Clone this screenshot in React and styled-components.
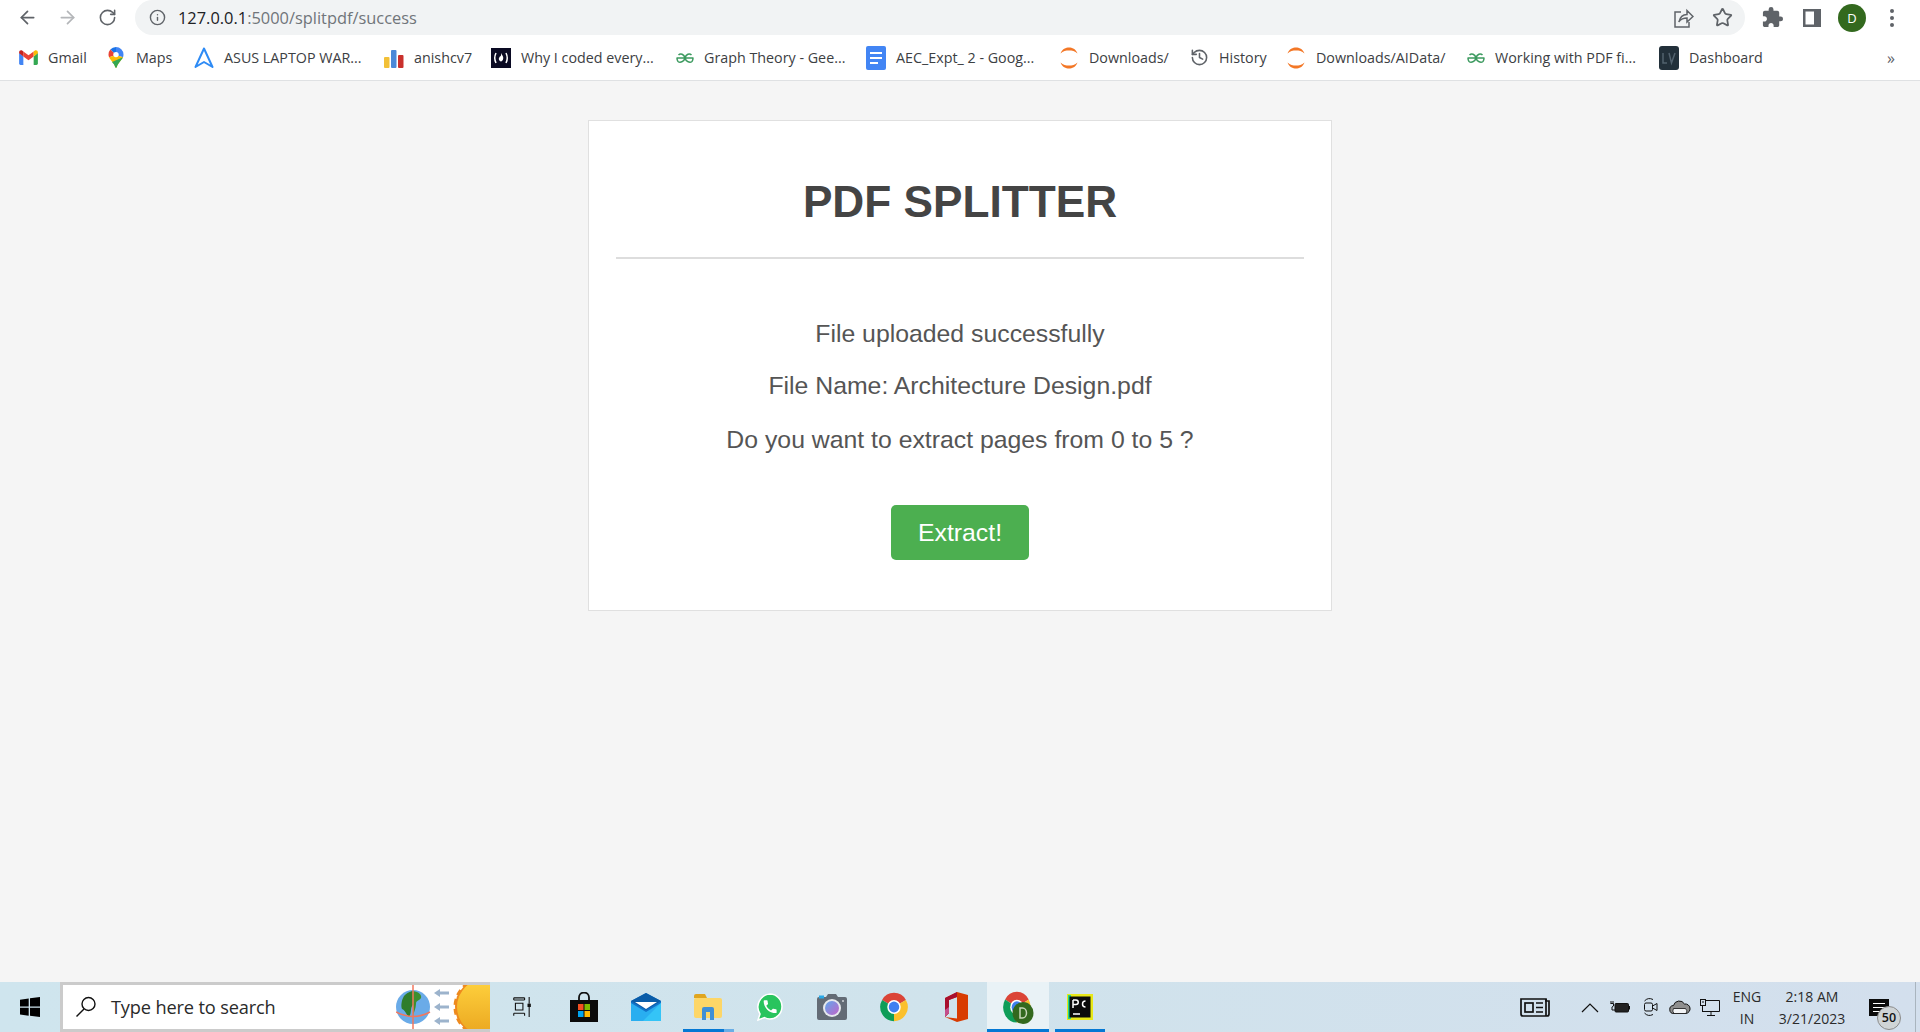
import React from 'react';
import styled, {createGlobalStyle} from 'styled-components';
import {ArrowLeft, ArrowRight, RotateCw, Info, Star, History} from 'lucide-react';
import {MdExtension} from 'react-icons/md';

const GlobalStyle = createGlobalStyle`
  html, body { margin: 0; padding: 0; }
  body { font-family: "Liberation Sans", Arial, sans-serif; background: #f5f5f5; }
`
const Screen = styled.div`
  display: flex;
  flex-direction: column;
  width: 1920px;
  height: 1032px;
  overflow: hidden;
`
const Toolbar = styled.div`
  display: flex;
  align-items: center;
  height: 35px;
  background: #fff;
  color: #5f6368;
`
const NavButton = styled.div`
  display: flex;
  align-items: center;
  justify-content: center;
  width: 40px;
  height: 35px;
  color: ${props => props.$muted ? '#b4b6b9' : '#5f6368'};
`
const NavGroup = styled.div`
  display: flex;
  padding-left: 7px;
  padding-right: 8px;
`
const Omnibox = styled.div`
  display: flex;
  align-items: center;
  width: 1610px;
  height: 35px;
  padding-left: 14px;
  box-sizing: border-box;
  background: #f1f3f4;
  border-radius: 18px;
`
const Url = styled.div`
  margin-left: 12px;
  font-family: "Open Sans", sans-serif;
  font-size: 16.4px;
  color: #70757a;
  white-space: nowrap;
  b { font-weight: 400; color: #202124; }
`
const OmniIcons = styled.div`
  display: flex;
  align-items: center;
  gap: 18px;
  margin-left: auto;
  padding-right: 12px;
`
const ChromeIcons = styled.div`
  display: flex;
  align-items: center;
  padding-left: 7px;
`
const Avatar = styled.div`
  display: flex;
  align-items: center;
  justify-content: center;
  width: 28px;
  height: 28px;
  border-radius: 50%;
  background: #33691e;
  color: #fff;
  font-family: "Open Sans", sans-serif;
  font-size: 13px;
`
const Bookmarks = styled.div`
  display: flex;
  align-items: center;
  height: 45px;
  padding-left: 19px;
  background: #fff;
  border-bottom: 1px solid #dfe1e3;
`
const Bookmark = styled.div`
  display: flex;
  flex: none;
  align-items: center;
  gap: 10px;
  width: ${props => props.$width}px;
  font-family: "Open Sans", sans-serif;
  font-size: 14.3px;
  color: #3c4043;
  white-space: nowrap;
  svg { flex: none; }
`
const Overflow = styled.div`
  margin-left: auto;
  padding-right: 25px;
  font-family: "Open Sans", sans-serif;
  font-size: 16px;
  color: #5f6368;
`
const Main = styled.main`
  flex: 1;
  padding-top: 39px;
  background: #f5f5f5;
`
const Card = styled.section`
  box-sizing: border-box;
  width: 744px;
  height: 491px;
  margin: 0 auto 0 588px;
  padding: 0 27px;
  background: #fff;
  border: 1px solid #e0e0e0;
  text-align: center;
`
const Title = styled.h1`
  margin: 0;
  padding-top: 54px;
  height: 138px;
  box-sizing: border-box;
  font-size: 44.2px;
  line-height: 53px;
  font-weight: 700;
  color: #444;
  border-bottom: 2px solid #ddd;
`
const Messages = styled.div`
  padding-top: 60px;
`
const Message = styled.p`
  margin: 0 0 ${props => props.$gap}px;
  font-size: 24.8px;
  line-height: 30px;
  color: #555;
`
const ExtractButton = styled.button`
  display: block;
  width: 138px;
  height: 55px;
  margin: 50px auto 0;
  padding: 0;
  border: 0;
  border-radius: 5px;
  background: #4caf50;
  color: #fff;
  font-family: inherit;
  font-size: 24.8px;
`
const Taskbar = styled.footer`
  display: flex;
  align-items: stretch;
  flex: none;
  height: 50px;
  background: linear-gradient(90deg, #cfe5ee 0%, #d0e3ec 50%, #d3dfed 100%);
`
const StartButton = styled.div`
  display: flex;
  align-items: center;
  justify-content: center;
  width: 60px;
`
const SearchBox = styled.div`
  display: flex;
  align-items: center;
  box-sizing: border-box;
  width: 430px;
  padding-left: 12px;
  background: #fff;
  border: 3px solid #cbcbcb;
  border-right: 0;
  overflow: hidden;
`
const SearchText = styled.span`
  margin-left: 14px;
  font-family: "Open Sans", sans-serif;
  font-size: 18.2px;
  letter-spacing: -0.15px;
  color: #2a2a2a;
`
const Weather = styled.svg`
  flex: none;
  margin-left: auto;
  margin-top: -3px;
  margin-bottom: -3px;
`
const TaskSlots = styled.div`
  display: flex;
  padding-left: 1px;
`
const TaskSlot = styled.div`
  position: relative;
  display: flex;
  align-items: center;
  justify-content: center;
  width: 62px;
  background: ${props => props.$active ? '#e9f2f6' : 'transparent'};
`
const RunningBar = styled.span`
  position: absolute;
  left: ${props => props.$inset}px;
  right: ${props => props.$inset}px;
  bottom: 0;
  height: 3px;
  background: #0478d4;
`
const GroupedBar = styled.span`
  position: absolute;
  right: 5px;
  bottom: 0;
  width: 10px;
  height: 3px;
  background: #6aaee6;
`
const Tray = styled.div`
  display: flex;
  align-items: center;
  margin-left: auto;
  padding-right: 4px;
  color: #1c1c1c;
`
const TrayIcon = styled.div`
  display: flex;
  align-items: center;
  justify-content: center;
  flex: none;
  width: ${props => props.$width}px;
  margin-right: ${props => props.$after || 0}px;
`
const TrayText = styled.div`
  display: flex;
  flex-direction: column;
  align-items: center;
  gap: 3px;
  flex: none;
  width: ${props => props.$width}px;
  font-family: "Open Sans", sans-serif;
  font-size: 14px;
  line-height: 19px;
  color: #2b2b2b;
`
const Notify = styled.div`
  position: relative;
  display: flex;
  align-items: center;
  flex: none;
  width: 50px;
  height: 100%;
  margin-left: 14px;
  padding-left: 3px;
  box-sizing: border-box;
  border-right: 1px solid #a9b4be;
`
const NotifyBadge = styled.span`
  position: absolute;
  left: 11px;
  top: 24px;
  width: 24px;
  height: 24px;
  box-sizing: border-box;
  border: 1px solid #8b8b8b;
  border-radius: 50%;
  background: #cfd4d6;
  font-family: "Open Sans", sans-serif;
  font-size: 12.5px;
  font-weight: 600;
  line-height: 22px;
  text-align: center;
  color: #111;
`

const GmailIcon = () => (
  <svg width="19" height="15" viewBox="0 0 20 16">
    <path d="M0 3v11.500A1.500 1.500 0 0 0 1.500 16H4.500V7z" fill="#4285f4"/>
    <path d="M20 3v11.500a1.500 1.500 0 0 1-1.500 1.500h-3V7z" fill="#34a853"/>
    <path d="M4.500 7 10 11l5.500-4V1.500L10 5.500 4.500 1.500z" fill="#ea4335"/>
    <path d="M0 3.500 4.500 7V1.500L3.200.6C1.800-.4 0 .6 0 2.300z" fill="#c5221f"/>
    <path d="M20 3.500 15.500 7V1.500L16.800.6C18.200-.4 20 .6 20 2.300z" fill="#fbbc04"/>
  </svg>
)
const MapsIcon = () => (
  <svg width="18" height="24" viewBox="2 0 18 24">
    <path d="M10 1a7.500 7.500 0 0 0-5.700 2.600L10 9z" fill="#1a73e8"/>
    <path d="M10 1a7.600 7.600 0 0 1 7.500 7.600c0 1-.2 1.800-.5 2.600L10 9z" fill="#4285f4"/>
    <path d="M4.300 3.600A7.500 7.500 0 0 0 2.500 8.600c0 1 .2 1.900.6 2.700L10 9z" fill="#ea4335"/>
    <path d="M3.100 11.300 10 9l7 2.200c-1.500 3.200-5.400 6-6.200 10-.1.600-1.500.600-1.600 0-.8-4-4.700-6.700-6.100-9.900z" fill="#fbbc04"/>
    <path d="M6 16 17 11.200c-1.500 3.200-5.400 6-6.200 10-.1.600-1.500.600-1.600 0C8.800 19 7.300 17.500 6 16z" fill="#34a853"/>
    <circle cx="10" cy="8.600" r="2.700" fill="#fff"/>
  </svg>
)
const AsusIcon = () => (
  <svg width="20" height="22" viewBox="0 0 20 22">
    <path d="M10 1.500 1.500 20 10 15l8.500 5z" fill="none" stroke="#2e8bf5" strokeWidth="2" strokeLinejoin="round"/>
  </svg>
)
const BarsIcon = () => (
  <svg width="20" height="20" viewBox="0 0 20 20">
    <rect x="0" y="9" width="5.500" height="11" rx="1" fill="#f2c037"/>
    <rect x="7" y="2" width="5.500" height="18" rx="1" fill="#4a88d8"/>
    <rect x="14" y="7" width="5.500" height="13" rx="1" fill="#c9302c"/>
  </svg>
)
const FreecodeIcon = () => (
  <svg width="20" height="20" viewBox="0 0 20 20">
    <rect width="20" height="20" fill="#0a0a23"/>
    <path d="M5 5Q2.500 10 5 15M15 5Q17.500 10 15 15" fill="none" stroke="#fff" strokeWidth="1.500"/>
    <path d="M10 5c1 2.500 3 3.500 2 6.500-.4 1.200-1.200 1.800-2 2-1-.2-1.800-.8-2.100-2-.5-1.800 1.200-2.300 1.300-4 .3.700.6 1 .8 1.300z" fill="#fff"/>
  </svg>
)
const GfgIcon = () => (
  <svg width="18" height="10" viewBox="0 0 18 10">
    <path d="M9 5H17.500M9 5H.500M9 5C8 1 4.500 0 2.500 2M9 5C10 1 13.500 0 15.500 2M9 5C8 9 4 10 2 8.500C1 7.500 1 6 1 5M9 5C10 9 14 10 16 8.500C17 7.500 17 6 17 5" fill="none" stroke="#3c9a5f" strokeWidth="1.500"/>
  </svg>
)
const DocsIcon = () => (
  <svg width="20" height="24" viewBox="0 0 20 24">
    <rect y="0" width="20" height="24" rx="2" fill="#4285f4"/>
    <path d="M4 7h12M4 12h12M4 17h8" stroke="#fff" strokeWidth="2.200"/>
  </svg>
)
const JupyterIcon = () => (
  <svg width="20" height="24" viewBox="0 0 20 24">
    <path d="M1.500 7.500C3 3 7 1.500 10 1.500s7 1.500 8.500 6C16 5 13 4.500 10 4.500S4 5 1.500 7.500zM1.500 16.500C3 21 7 22.500 10 22.500s7-1.500 8.500-6C16 19 13 19.500 10 19.500S4 19 1.500 16.500z" fill="#f37726"/>
  </svg>
)
const DashboardIcon = () => (
  <svg width="20" height="24" viewBox="0 0 20 24">
    <rect width="20" height="24" rx="3" fill="#22303a"/>
    <path d="M4 7v10h4M10 7l2.500 10L16 7" fill="none" stroke="#52626e" strokeWidth="1.500"/>
  </svg>
)
const ShareIcon = () => (
  <svg width="22" height="22" viewBox="0 0 22 22" fill="none" stroke="#5f6368" strokeWidth="1.500">
    <path d="M9 5H3v15h14v-5"/>
    <path d="M7 15c1-5 4-7.500 8-7.500V3.500l6 6-6 5.500v-4c-3 0-6 1-8 3.500z"/>
  </svg>
)
const SidePanelIcon = () => (
  <svg width="18" height="18" viewBox="0 0 18 18">
    <path d="M0 0h18v18H0zM2.500 2.500v13H11v-13z" fill="#5f6368" fillRule="evenodd"/>
  </svg>
)
const DotsIcon = () => (
  <svg width="4" height="18" viewBox="0 0 4 18">
    <circle cx="2" cy="2" r="2" fill="#5f6368"/>
    <circle cx="2" cy="9" r="2" fill="#5f6368"/>
    <circle cx="2" cy="16" r="2" fill="#5f6368"/>
  </svg>
)
const WindowsIcon = () => (
  <svg width="20" height="20" viewBox="0 0 20 20">
    <path d="M0 2.800 8.700 1.500v8H0zM10 1.300 20 0v9.500H10zM0 10.700h8.700v8L0 17.400zM10 10.700h10V20L10 18.700z" fill="#000"/>
  </svg>
)
const MagnifierIcon = () => (
  <svg width="22" height="22" viewBox="0 0 22 22" fill="none" stroke="#111" strokeWidth="1.400">
    <circle cx="13.500" cy="8" r="6.500"/>
    <path d="M9 13 1.500 20.500"/>
  </svg>
)
const WeatherIcon = () => (
  <Weather width="94" height="50" viewBox="0 0 94 50">
    <defs>
      <linearGradient id="sun" x1="0" y1="0" x2="0" y2="1">
        <stop offset="0" stopColor="#ffd23e"/>
        <stop offset="1" stopColor="#eaa620"/>
      </linearGradient>
    </defs>
    <ellipse cx="17" cy="25" rx="17" ry="17" fill="#6aabe8"/>
    <path d="M8 14c5-5 9-5 9-5v14c-3 2-1 8-4 12-3-3-4-7-7-8-1-2-1-8 2-13z" fill="#2f7d2c"/>
    <path d="M17 9c6 1 9 4 8 7-2 3-5 2-5 6 0 5-3 9-3 13z" fill="#3d8f2f"/>
    <path d="M17 0v50" stroke="#f3775c" strokeWidth="1.500"/>
    <path d="M0 30q17 9 34 0" fill="none" stroke="#f3775c" strokeWidth="1.500"/>
    <path d="M38 11l6-4v2.500h9v3h-9V15zM38 25l6-4v2.500h9v3h-9V29zM38 39l6-4v2.500h9v3h-9V43z" fill="#9cb3cc"/>
    <circle cx="87" cy="25" r="28" fill="#ee8a1e" stroke="#ee8a1e" strokeWidth="3" strokeDasharray="6 4"/>
    <circle cx="89" cy="25" r="28" fill="url(#sun)"/>
  </Weather>
)
const TaskViewIcon = () => (
  <svg width="23" height="20" viewBox="0 0 23 24" fill="none" stroke="#111" strokeWidth="1.300">
    <path d="M1 1h13M1 3.500h13M3 7.500h9v8H3zM1 19.500h13M1 22.500V19.500M14 19.500v3M1 3.500V1M14 3.500V1M19.500 0v8M19.500 12v12"/>
    <rect x="17.500" y="8" width="4" height="4" fill="#111" stroke="none"/>
  </svg>
)
const StoreIcon = () => (
  <svg width="30" height="30" viewBox="0 0 30 30">
    <path d="M10 9V5.500a5 5 0 0 1 10 0V9" fill="none" stroke="#111" strokeWidth="1.800"/>
    <path d="M1 8h28v22H1z" fill="#0b0b0b"/>
    <rect x="9" y="12" width="5.500" height="6" fill="#f25022"/>
    <rect x="15.500" y="12" width="5.500" height="6" fill="#7fba00"/>
    <rect x="9" y="19" width="5.500" height="6" fill="#00a4ef"/>
    <rect x="15.500" y="19" width="5.500" height="6" fill="#ffb900"/>
  </svg>
)
const MailIcon = () => (
  <svg width="30" height="28" viewBox="0 0 30 28">
    <path d="M0 8 15 0l15 8v20H0z" fill="#1173c9"/>
    <path d="M0 8 15 0l15 8-15 9z" fill="#0a5ca8"/>
    <path d="M4 9h22l-11 7z" fill="#fff"/>
    <path d="M0 10 15 19 30 10v18H0z" fill="#29aef0"/>
    <path d="M30 10v18H12z" fill="#34c4f7"/>
  </svg>
)
const ExplorerIcon = () => (
  <svg width="28" height="26" viewBox="0 0 28 26">
    <path d="M0 2a2 2 0 0 1 2-2h9l2 4H0z" fill="#e0a51e"/>
    <rect y="4" width="28" height="20" rx="2" fill="#fdd667"/>
    <path d="M8 26V15a2 2 0 0 1 2-2h8a2 2 0 0 1 2 2v11h-4v-8h-4v8z" fill="#3f8fd6"/>
  </svg>
)
const WhatsappIcon = () => (
  <svg width="26" height="32" viewBox="0 0 26 32">
    <path d="M13 3a12 12.500 0 0 1 0 25c-2 0-4-.5-5.500-1.500L1 29l2-6A13 13 0 0 1 13 3z" fill="#29c45e" stroke="#fff" strokeWidth="1.500"/>
    <g transform="translate(4.500 7) scale(.72)">
      <path d="M6.620 10.790c1.440 2.830 3.760 5.140 6.590 6.590l2.200-2.200c.27-.27.67-.36 1.020-.24 1.120.37 2.330.57 3.570.57.55 0 1 .45 1 1V20c0 .55-.45 1-1 1-9.390 0-17-7.610-17-17 0-.55.45-1 1-1h3.500c.55 0 1 .45 1 1 0 1.250.2 2.450.57 3.570.11.35.03.74-.25 1.020l-2.200 2.200z" fill="#fff"/>
    </g>
  </svg>
)
const CameraIcon = () => (
  <svg width="30" height="26" viewBox="0 0 30 26">
    <defs>
      <linearGradient id="lens" x1="0" y1="0" x2="1" y2="1">
        <stop offset="0" stopColor="#5fa8ee"/>
        <stop offset="1" stopColor="#c264c8"/>
      </linearGradient>
    </defs>
    <path d="M0 5a2 2 0 0 1 2-2h7l2-3h8l2 3h7a2 2 0 0 1 2 2v19a2 2 0 0 1-2 2H2a2 2 0 0 1-2-2z" fill="#636b75"/>
    <rect x="2" y="1.500" width="5" height="3" fill="#29a9e8"/>
    <circle cx="15" cy="14" r="9" fill="#e6e9ee"/>
    <circle cx="15" cy="14" r="7" fill="url(#lens)"/>
    <circle cx="26" cy="7" r="1" fill="#cfd3d8"/>
  </svg>
)
const ChromeLogo = ({size = 30}) => (
  <svg width={size} height={size + 6} viewBox="0 0 24 28" preserveAspectRatio="none">
    <g transform="translate(0 2)">
      <path d="M12 12 2.470 6.500A11 11 0 0 1 21.530 6.500z" fill="#db4437"/>
      <path d="M12 12 2.470 6.500A11 11 0 0 0 12 23z" fill="#0f9d58"/>
      <path d="M12 12 12 23A11 11 0 0 0 21.530 6.500z" fill="#fbc02d"/>
      <circle cx="12" cy="12" r="5.400" fill="#fff"/>
      <circle cx="12" cy="12" r="4.200" fill="#3f7ff0"/>
    </g>
  </svg>
)
const ProfiledChromeIcon = () => (
  <svg width="32" height="36" viewBox="0 0 32 36">
    <g transform="scale(1.240 1.400) translate(0 1)">
      <path d="M12 12 2.470 6.500A11 11 0 0 1 21.530 6.500z" fill="#db4437"/>
      <path d="M12 12 2.470 6.500A11 11 0 0 0 12 23z" fill="#0f9d58"/>
      <path d="M12 12 12 23A11 11 0 0 0 21.530 6.500z" fill="#fbc02d"/>
      <circle cx="12" cy="12" r="5.400" fill="#fff"/>
      <circle cx="12" cy="12" r="4.200" fill="#3f7ff0"/>
    </g>
    <ellipse cx="21" cy="24" rx="10.500" ry="11" fill="#33691e"/>
    <path d="M18 19v10h2.500a4 5 0 0 0 0-10z" fill="none" stroke="#c8d6b9" strokeWidth="1.500"/>
  </svg>
)
const OfficeIcon = () => (
  <svg width="24" height="30" viewBox="0 0 24 30">
    <path d="M13 0 24 3v24l-11 3L1 25l12 1.500V5L5 8v13l-4 4V6z" fill="#d83b01"/>
    <path d="M1 6 13 0v5L5 8v13l-4 4z" fill="#a80f2e"/>
    <path d="M1 25l4-4v-6L1 18z" fill="#c34f8b"/>
  </svg>
)
const PycharmIcon = () => (
  <svg width="26" height="26" viewBox="0 0 26 26">
    <rect width="26" height="26" fill="#e8e818"/>
    <rect x="1" y="1" width="3" height="24" fill="#21d789"/>
    <rect x="2.500" y="2.500" width="21" height="21" fill="#0b0b0b"/>
    <path d="M6 6v8M6 6h3a2 2 0 0 1 0 4.500H6M18.500 7a3 3 0 1 0 0 6M6 20h7" fill="none" stroke="#fff" strokeWidth="1.500"/>
  </svg>
)
const NewsIcon = () => (
  <svg width="30" height="20" viewBox="0 0 30 20" fill="none" stroke="#111" strokeWidth="1.700">
    <path d="M26 2H1v15a2 2 0 0 0 2 2h24a2 2 0 0 0 2-2V4h-3z"/>
    <path d="M26 2v17"/>
    <rect x="5" y="6" width="8" height="9"/>
    <path d="M16 6h7M16 10.500h7M16 15h7"/>
  </svg>
)
const ChevronIcon = () => (
  <svg width="18" height="11" viewBox="0 0 18 11" fill="none" stroke="#111" strokeWidth="1.200">
    <path d="M1 10 9 2l8 8"/>
  </svg>
)
const BatteryIcon = () => (
  <svg width="20" height="12" viewBox="0 0 20 12" fill="none" stroke="#111" strokeWidth="1">
    <path d="M1 0v2.500M3 0v2.500M.5 2.500h3v2.500L2 6v3h3"/>
    <rect x="5" y="2.500" width="13.500" height="8.500" rx="1" fill="#222"/>
    <path d="M19.500 5v3.500"/>
  </svg>
)
const MeetIcon = () => (
  <svg width="16" height="20" viewBox="0 0 16 20" fill="none" stroke="#111" strokeWidth="1">
    <rect x="1.500" y="6" width="8" height="8" rx="1.500"/>
    <path d="M9.500 9 14 6.500v7L9.500 11M1.500 4Q5 0 10 2.500M1.500 16Q5 20 10 17.500"/>
  </svg>
)
const CloudIcon = () => (
  <svg width="22" height="14" viewBox="0 0 22 14">
    <path d="M5 13.500a4 4 0 0 1-.5-8A6 6 0 0 1 15.500 4 4.800 4.800 0 0 1 17 13.500z" fill="#8f8f8f" stroke="#111" strokeWidth="1"/>
    <path d="M5 13.500a4 4 0 0 1-.5-5h12a3.600 3.600 0 0 1 .5 5z" fill="#f2f4f6" stroke="#111" strokeWidth=".8"/>
  </svg>
)
const NetworkIcon = () => (
  <svg width="20" height="17" viewBox="0 0 20 17" fill="none" stroke="#111" strokeWidth="1">
    <path d="M5 1.500h14.500v11H2"/>
    <rect x=".5" y=".5" width="5" height="6"/>
    <path d="M2 3h2M2.500 6.500v6M11 12.500v4M7 16.500h8"/>
  </svg>
)
const ActionCenterIcon = () => (
  <svg width="20" height="17" viewBox="0 0 20 17">
    <rect width="20" height="17" fill="#0c0c0c"/>
    <path d="M4 4.500h12M4 8.500h12M4 12.500h12" stroke="#fff" strokeWidth="1.200"/>
  </svg>
)

const bookmarks = [
  {label: 'Gmail', width: 89, icon: <GmailIcon/>},
  {label: 'Maps', width: 86, icon: <MapsIcon/>},
  {label: 'ASUS LAPTOP WAR...', width: 190, icon: <AsusIcon/>},
  {label: 'anishcv7', width: 107, icon: <BarsIcon/>},
  {label: 'Why I coded every...', width: 185, icon: <FreecodeIcon/>},
  {label: 'Graph Theory - Gee...', width: 190, icon: <GfgIcon/>},
  {label: 'AEC_Expt_ 2 - Goog...', width: 193, icon: <DocsIcon/>},
  {label: 'Downloads/', width: 131, icon: <JupyterIcon/>},
  {label: 'History', width: 96, icon: <History size={19} color="#5f6368"/>},
  {label: 'Downloads/AIData/', width: 181, icon: <JupyterIcon/>},
  {label: 'Working with PDF fi...', width: 192, icon: <GfgIcon/>},
  {label: 'Dashboard', width: 110, icon: <DashboardIcon/>},
];

const App = () => {
  return (
    <Screen>
      <GlobalStyle/>
      <Toolbar>
        <NavGroup>
          <NavButton><ArrowLeft size={21}/></NavButton>
          <NavButton $muted><ArrowRight size={21}/></NavButton>
          <NavButton><RotateCw size={19}/></NavButton>
        </NavGroup>
        <Omnibox>
          <Info size={17} color="#5f6368"/>
          <Url><b>127.0.0.1</b>:5000/splitpdf/success</Url>
          <OmniIcons>
            <ShareIcon/>
            <Star size={21} color="#5f6368"/>
          </OmniIcons>
        </Omnibox>
        <ChromeIcons>
          <NavButton><MdExtension size={23}/></NavButton>
          <NavButton><SidePanelIcon/></NavButton>
          <NavButton><Avatar>D</Avatar></NavButton>
          <NavButton><DotsIcon/></NavButton>
        </ChromeIcons>
      </Toolbar>
      <Bookmarks>
        {bookmarks.map(item => (
          <Bookmark key={item.label} $width={item.width}>
            {item.icon}
            <span>{item.label}</span>
          </Bookmark>
        ))}
        <Overflow>»</Overflow>
      </Bookmarks>
      <Main>
        <Card>
          <Title>PDF SPLITTER</Title>
          <Messages>
            <Message $gap={22}>File uploaded successfully</Message>
            <Message $gap={24}>File Name: Architecture Design.pdf</Message>
            <Message $gap={0}>Do you want to extract pages from 0 to 5 ?</Message>
          </Messages>
          <ExtractButton>Extract!</ExtractButton>
        </Card>
      </Main>
      <Taskbar>
        <StartButton><WindowsIcon/></StartButton>
        <SearchBox>
          <MagnifierIcon/>
          <SearchText>Type here to search</SearchText>
          <WeatherIcon/>
        </SearchBox>
        <TaskSlots>
          <TaskSlot><TaskViewIcon/></TaskSlot>
          <TaskSlot><StoreIcon/></TaskSlot>
          <TaskSlot><MailIcon/></TaskSlot>
          <TaskSlot><ExplorerIcon/><RunningBar $inset={6}/><GroupedBar/></TaskSlot>
          <TaskSlot><WhatsappIcon/></TaskSlot>
          <TaskSlot><CameraIcon/></TaskSlot>
          <TaskSlot><ChromeLogo/></TaskSlot>
          <TaskSlot><OfficeIcon/></TaskSlot>
          <TaskSlot $active><ProfiledChromeIcon/><RunningBar $inset={0}/></TaskSlot>
          <TaskSlot><PycharmIcon/><RunningBar $inset={6}/></TaskSlot>
        </TaskSlots>
        <Tray>
          <TrayIcon $width={40} $after={25}><NewsIcon/></TrayIcon>
          <TrayIcon $width={20}><ChevronIcon/></TrayIcon>
          <TrayIcon $width={40}><BatteryIcon/></TrayIcon>
          <TrayIcon $width={22}><MeetIcon/></TrayIcon>
          <TrayIcon $width={36}><CloudIcon/></TrayIcon>
          <TrayIcon $width={24}><NetworkIcon/></TrayIcon>
          <TrayText $width={50}><span>ENG</span><span>IN</span></TrayText>
          <TrayText $width={80}><span>2:18 AM</span><span>3/21/2023</span></TrayText>
          <Notify>
            <ActionCenterIcon/>
            <NotifyBadge>50</NotifyBadge>
          </Notify>
        </Tray>
      </Taskbar>
    </Screen>
  );
}

export default App;
